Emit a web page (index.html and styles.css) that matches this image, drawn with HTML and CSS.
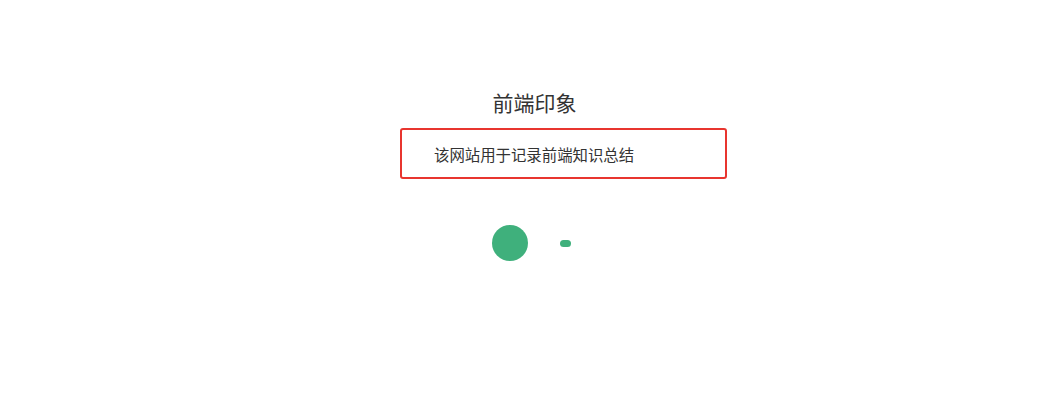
FILE: index.html
```html
<!DOCTYPE html>
<html lang="zh">
<head>
<meta charset="utf-8">
<link rel="stylesheet" href="styles.css">
</head>
<body>
<main class="page">
  <h1 class="title">前端印象</h1>
  <div class="notice">该网站用于记录前端知识总结</div>
  <div class="loader">
    <span class="dot big"></span>
    <span class="dot small"></span>
  </div>
</main>
</body>
</html>
```
FILE: styles.css
```css
html, body {
  margin: 0;
  padding: 0;
  background: #ffffff;
}
body {
  font-family: "Noto Sans CJK SC", "Noto Sans", sans-serif;
  color: #333333;
}
.page {
  width: 1063px;
  height: 400px;
  display: flex;
  flex-direction: column;
  align-items: center;
}
.title {
  margin: 88px 0 0 6px;
  font-size: 21px;
  line-height: 28px;
  font-weight: 400;
  color: #333;
}
.notice {
  box-sizing: border-box;
  width: 327px;
  height: 51px;
  margin: 12px 0 0 64px;
  border: 2px solid #e8352f;
  border-radius: 3px;
  padding-left: 32px;
  display: flex;
  align-items: center;
  font-size: 15.4px;
  color: #333;
}
.loader {
  margin-top: 46px;
  display: flex;
  align-items: center;
  gap: 32px;
}
.dot {
  display: block;
  background: #3fb07c;
  border-radius: 50%;
}
.dot.big {
  width: 36px;
  height: 36px;
}
.dot.small {
  width: 11px;
  height: 7px;
  border-radius: 4px;
}
```
